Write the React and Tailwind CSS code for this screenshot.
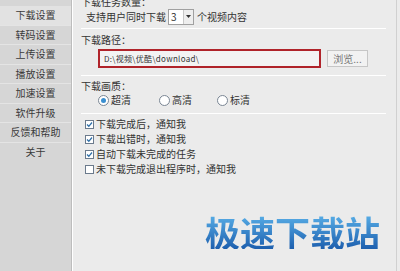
import React from "react";

const menu = ["下载设置", "转码设置", "上传设置", "播放设置", "加速设置", "软件升级", "反馈和帮助", "关于"];

function Check({ on }) {
  return (
    <span className="w-[9px] h-[9px] border border-[#6b7a8c] bg-white flex items-center justify-center shrink-0">
      {on && (
        <svg width="7" height="7" viewBox="0 0 7 7">
          <path d="M1 3.5 L2.8 5.3 L6 1.5" stroke="#2f6fa8" strokeWidth="1.3" fill="none" />
        </svg>
      )}
    </span>
  );
}

function Radio({ on }) {
  return (
    <span className="w-[11px] h-[11px] rounded-full border border-[#7a8694] bg-white flex items-center justify-center shrink-0">
      {on && <span className="w-[5px] h-[5px] rounded-full bg-[#3a8fd0]" />}
    </span>
  );
}

export default function App() {
  return (
    <div
      className="w-[400px] h-[271px] flex overflow-hidden bg-[#ebebeb] text-[#333] text-[10px] leading-none"
      style={{ fontFamily: '"Noto Sans CJK SC", "Liberation Sans", sans-serif' }}
    >
      {/* left menu */}
      <nav className="w-[72px] shrink-0 bg-[#d6d6d6] border-r border-[#bdbdbd] flex flex-col pt-[6px] text-[#3a3a3a]">
        {menu.map((m, i) => (
          <div
            key={m}
            className={`h-[19.5px] flex items-center justify-center border-b border-[#e4e4e4] ${
              i === 0 ? "bg-[#e2e2e2]" : ""
            } ${i === menu.length - 1 ? "border-b-0" : ""}`}
          >
            {m}
          </div>
        ))}
      </nav>

      {/* main */}
      <main className="flex-1 border-l border-white border-r border-r-[#d0d0d0] mr-[3px] relative pl-[8px] pr-[4px]">
        <div className="-mt-[3px] h-[8px]">下载任务数量：</div>

        <div className="flex items-center h-[21px] pl-[5px] mt-[1px]">
          <span>支持用户同时下载</span>
          <div className="ml-[2px] w-[26px] h-[16px] border border-[#a0a0a0] bg-white flex">
            <span className="flex-1 pl-[2px] flex items-center">3</span>
            <span className="w-[10px] border-l border-[#c8c8c8] bg-[#eeeeee] flex items-center justify-center">
              <svg width="5" height="3" viewBox="0 0 5 3">
                <path d="M0 0 H5 L2.5 3 Z" fill="#333" />
              </svg>
            </span>
          </div>
          <span className="ml-[3px]">个视频内容</span>
        </div>

        <div className="h-px bg-[#d2d2d2] border-b border-white mt-[1px] mr-[6px]" />

        <div className="mt-[6px]">下载路径：</div>
        <div className="flex items-center mt-[4px] pl-[17px]">
          <div className="w-[223px] h-[19px] border-2 border-[#b0232a] bg-[#f3f3f3] flex items-center pl-[4px] text-[8px] tracking-[0.3px]">
            D:\视频\优酷\download\
          </div>
          <div className="ml-[6px] w-[41px] h-[17px] border border-[#c6c6c6] bg-[#f2f2f2] text-[#777] flex items-center justify-center">
            浏览...
          </div>
        </div>

        <div className="h-px bg-[#d2d2d2] border-b border-white mt-[7px] mr-[6px]" />

        <div className="mt-[5px]">下载画质：</div>
        <div className="flex items-center mt-[2px] pl-[17px] h-[14px]">
          <div className="flex items-center gap-[2px] w-[61px]">
            <Radio on />
            <span>超清</span>
          </div>
          <div className="flex items-center gap-[2px] w-[58px]">
            <Radio />
            <span>高清</span>
          </div>
          <div className="flex items-center gap-[2px]">
            <Radio />
            <span>标清</span>
          </div>
        </div>

        <div className="h-px bg-[#d2d2d2] border-b border-white mt-[6px] mr-[6px]" />

        <div className="flex flex-col gap-[5px] mt-[5px] pl-[4px]">
          <label className="flex items-center gap-[2px] h-[10px]">
            <Check on />
            下载完成后，通知我
          </label>
          <label className="flex items-center gap-[2px] h-[10px]">
            <Check on />
            下载出错时，通知我
          </label>
          <label className="flex items-center gap-[2px] h-[10px]">
            <Check on />
            自动下载未完成的任务
          </label>
          <label className="flex items-center gap-[2px] h-[10px]">
            <Check />
            未下载完成退出程序时，通知我
          </label>
        </div>

        {/* watermark */}
        <div
          className="absolute left-[132px] top-[214px] text-[35px] font-bold leading-none bg-gradient-to-b from-[#5ab0e8] to-[#1d5fae] bg-clip-text text-transparent"
          style={{ fontFamily: '"Noto Sans CJK SC", sans-serif' }}
        >
          极速下载站
        </div>
      </main>
    </div>
  );
}
